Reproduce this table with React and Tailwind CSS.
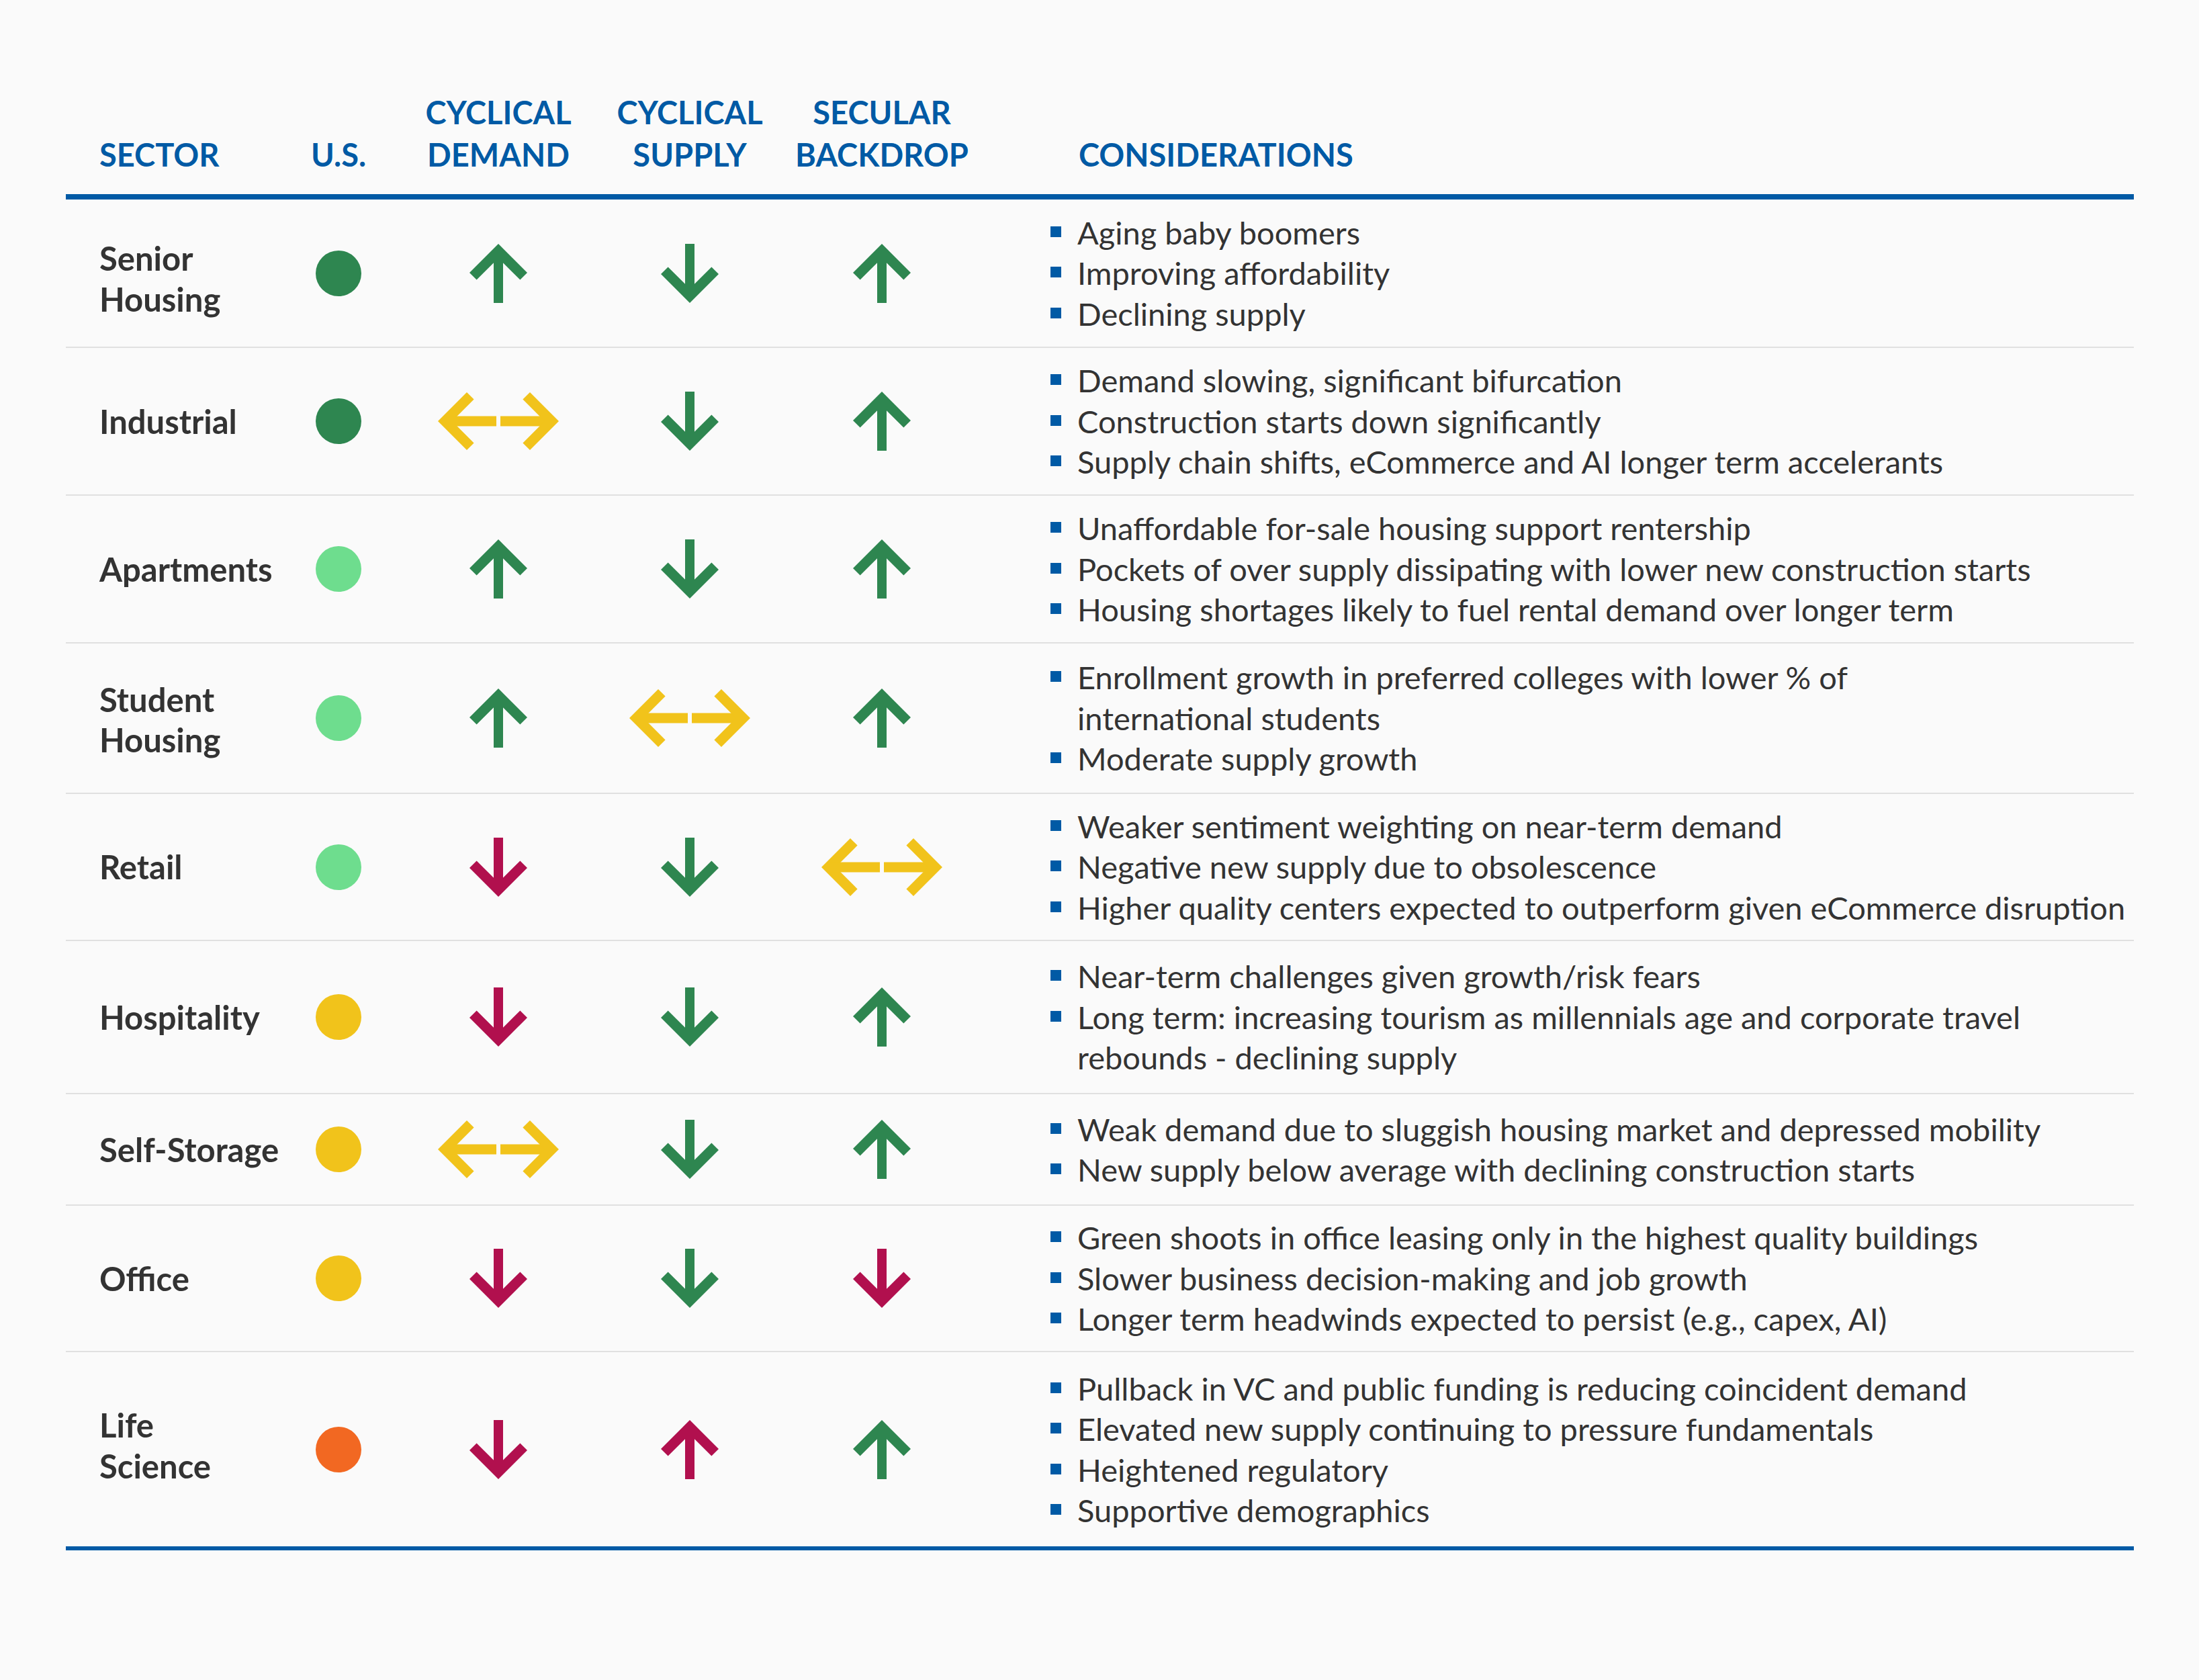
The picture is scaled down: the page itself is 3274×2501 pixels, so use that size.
import React from "react";

const GREEN = "#2e8650";
const RED = "#b1104e";
const YELLOW = "#f1c31b";

const Arrow = ({ dir, color }) => {
  if (dir === "both") {
    return (
      <svg width="180" height="86" viewBox="0 0 180 86" fill="none">
        <g stroke={color} strokeWidth="15" strokeLinejoin="miter" strokeMiterlimit="4">
          <polyline points="48.3,5.3 10.6,43 48.3,80.7" />
          <line x1="12" y1="43" x2="87" y2="43" />
          <line x1="93" y1="43" x2="168" y2="43" />
          <polyline points="131.7,5.3 169.4,43 131.7,80.7" />
        </g>
      </svg>
    );
  }
  if (dir === "up") {
    return (
      <svg width="86" height="88" viewBox="0 0 86 88" fill="none">
        <g stroke={color} strokeWidth="15" strokeLinejoin="miter" strokeMiterlimit="4">
          <polyline points="5.3,48.3 43,10.6 80.7,48.3" />
          <line x1="43" y1="12" x2="43" y2="88" strokeWidth="14" />
        </g>
      </svg>
    );
  }
  return (
    <svg width="86" height="88" viewBox="0 0 86 88" fill="none">
      <g stroke={color} strokeWidth="15" strokeLinejoin="miter" strokeMiterlimit="4">
        <polyline points="5.3,39.7 43,77.4 80.7,39.7" />
        <line x1="43" y1="0" x2="43" y2="76" strokeWidth="14" />
      </g>
    </svg>
  );
};

const rows = [
  {
    name: ["Senior", "Housing"],
    nameFix: "pt-[16px]",
    dot: "bg-[#2e8650]",
    demand: ["up", GREEN],
    supply: ["down", GREEN],
    secular: ["up", GREEN],
    bullets: [["Aging baby boomers"], ["Improving affordability"], ["Declining supply"]],
    h: "h-[221px] border-b-2 border-[#e0e0e0]",
  },
  {
    name: ["Industrial"],
    dot: "bg-[#2e8650]",
    demand: ["both", YELLOW],
    supply: ["down", GREEN],
    secular: ["up", GREEN],
    bullets: [
      ["Demand slowing, significant bifurcation"],
      ["Construction starts down significantly"],
      ["Supply chain shifts, eCommerce and AI longer term accelerants"],
    ],
    h: "h-[220px] border-b-2 border-[#e0e0e0]",
  },
  {
    name: ["Apartments"],
    dot: "bg-[#6edd8e]",
    demand: ["up", GREEN],
    supply: ["down", GREEN],
    secular: ["up", GREEN],
    bullets: [
      ["Unaffordable for-sale housing support rentership"],
      ["Pockets of over supply dissipating with lower new construction starts"],
      ["Housing shortages likely to fuel rental demand over longer term"],
    ],
    h: "h-[220px] border-b-2 border-[#e0e0e0]",
  },
  {
    name: ["Student", "Housing"],
    nameFix: "pt-[4px]",
    dot: "bg-[#6edd8e]",
    demand: ["up", GREEN],
    supply: ["both", YELLOW],
    secular: ["up", GREEN],
    bullets: [
      ["Enrollment growth in preferred colleges with lower % of", "international students"],
      ["Moderate supply growth"],
    ],
    h: "h-[224px] border-b-2 border-[#e0e0e0]",
  },
  {
    name: ["Retail"],
    dot: "bg-[#6edd8e]",
    demand: ["down", RED],
    supply: ["down", GREEN],
    secular: ["both", YELLOW],
    bullets: [
      ["Weaker sentiment weighting on near-term demand"],
      ["Negative new supply due to obsolescence"],
      ["Higher quality centers expected to outperform given eCommerce disruption"],
    ],
    h: "h-[219px] border-b-2 border-[#e0e0e0]",
  },
  {
    name: ["Hospitality"],
    dot: "bg-[#f1c31b]",
    demand: ["down", RED],
    supply: ["down", GREEN],
    secular: ["up", GREEN],
    bullets: [
      ["Near-term challenges given growth/risk fears"],
      ["Long term: increasing tourism as millennials age and corporate travel", "rebounds - declining supply"],
    ],
    h: "h-[228px] border-b-2 border-[#e0e0e0]",
  },
  {
    name: ["Self-Storage"],
    dot: "bg-[#f1c31b]",
    demand: ["both", YELLOW],
    supply: ["down", GREEN],
    secular: ["up", GREEN],
    bullets: [
      ["Weak demand due to sluggish housing market and depressed mobility"],
      ["New supply below average with declining construction starts"],
    ],
    h: "h-[166px] border-b-2 border-[#e0e0e0]",
  },
  {
    name: ["Office"],
    dot: "bg-[#f1c31b]",
    demand: ["down", RED],
    supply: ["down", GREEN],
    secular: ["down", RED],
    bullets: [
      ["Green shoots in office leasing only in the highest quality buildings"],
      ["Slower business decision-making and job growth"],
      ["Longer term headwinds expected to persist (e.g., capex, AI)"],
    ],
    h: "h-[218px] border-b-2 border-[#e0e0e0]",
  },
  {
    name: ["Life", "Science"],
    nameFix: "pb-[12px]",
    dot: "bg-[#f26822]",
    demand: ["down", RED],
    supply: ["up", RED],
    secular: ["up", GREEN],
    bullets: [
      ["Pullback in VC and public funding is reducing coincident demand"],
      ["Elevated new supply continuing to pressure fundamentals"],
      ["Heightened regulatory"],
      ["Supportive demographics"],
    ],
    h: "h-[295px] border-b-[6px] border-[#005aa5]",
  },
];

const cols = "grid grid-cols-[330px_152px_324px_246px_326px_1701px]";

export default function App() {
  return (
    <div className="min-h-[2501px] w-[3274px] bg-[#fafafa] pl-[98px] pt-[136px] font-['Lato',sans-serif] text-[#333333]">
      <div className="w-[3079px]">
        <div className={`${cols} h-[161px] items-end border-b-[8px] border-[#005aa5] pb-[27px] text-[47px] font-bold uppercase leading-[63px] text-[#005aa5]`}>
          <div className="pl-[50px]">Sector</div>
          <div className="text-center">U.S.</div>
          <div className="text-center">
            Cyclical
            <br />
            Demand
          </div>
          <div className="text-center">
            Cyclical
            <br />
            Supply
          </div>
          <div className="text-center">
            Secular
            <br />
            Backdrop
          </div>
          <div className="pl-[130px]">Considerations</div>
        </div>

        {rows.map((r) => (
          <div key={r.name.join(" ")} className={`${cols} ${r.h} items-center`}>
            <div className={`whitespace-nowrap pl-[50px] text-[49px] font-bold leading-[60.5px] ${r.nameFix || ""}`}>
              {r.name.map((n) => (
                <div key={n}>{n}</div>
              ))}
            </div>
            <div className="flex justify-center">
              <div className={`h-[68px] w-[68px] rounded-full ${r.dot}`} />
            </div>
            <div className="flex justify-center">
              <Arrow dir={r.demand[0]} color={r.demand[1]} />
            </div>
            <div className="flex justify-center">
              <Arrow dir={r.supply[0]} color={r.supply[1]} />
            </div>
            <div className="flex justify-center">
              <Arrow dir={r.secular[0]} color={r.secular[1]} />
            </div>
            <div className="flex flex-col pl-[88px] text-[47px] leading-[60.5px]">
              {r.bullets.map((b) => (
                <div key={b[0]} className="flex items-start gap-[24px]">
                  <div className="mt-[21px] h-[16px] w-[16px] shrink-0 bg-[#005aa5]" />
                  <div className="whitespace-nowrap">
                    {b.map((line) => (
                      <div key={line}>{line}</div>
                    ))}
                  </div>
                </div>
              ))}
            </div>
          </div>
        ))}
      </div>
    </div>
  );
}
